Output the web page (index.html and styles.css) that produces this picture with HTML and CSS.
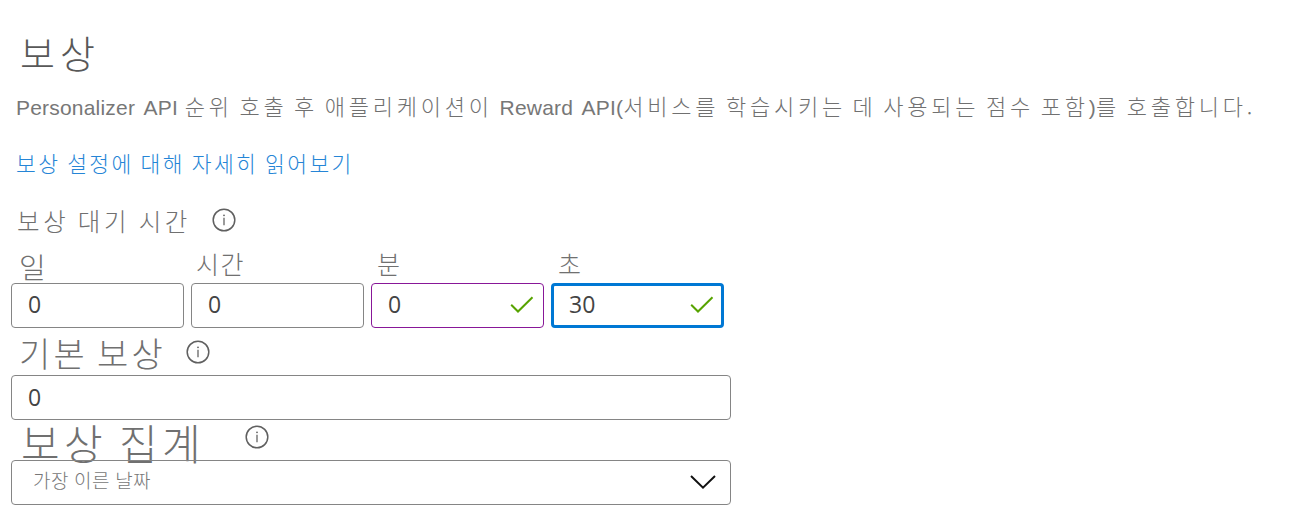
FILE: index.html
```html
<!DOCTYPE html>
<html lang="ko">
<head>
<meta charset="utf-8">
<title>보상</title>
<link rel="stylesheet" href="styles.css">
</head>
<body>
<svg class="defs" width="0" height="0">
  <symbol id="info" viewBox="0 0 24 24"><circle cx="12" cy="12" r="10.8" fill="none" stroke="#606060" stroke-width="1.5"/><path d="M12 9.8v7.4" stroke="#707070" stroke-width="1.4"/><circle cx="12" cy="7.3" r="0.9" fill="#606060"/></symbol>
  <symbol id="check" viewBox="0 0 24 18"><path d="M1.2 8.8L8 15.5L22.5 1.2" fill="none" stroke="#57a300" stroke-width="2"/></symbol>
</svg>
<main class="panel">
  <h1 class="title">보상</h1>
  <p class="desc"><span class="latin">Personalizer API</span> 순위 호출 후 애플리케이션이 <span class="latin">Reward API(</span>서비스를 학습시키는 데 사용되는 점수 포함<span class="latin">)</span>를 호출합니다.</p>
  <a class="link">보상 설정에 대해 자세히 읽어보기</a>
  <div class="label wait"><span>보상 대기 시간</span><svg class="info"><use href="#info"/></svg></div>
  <div class="durations">
    <div class="field"><label class="unit day">일</label><div class="box">0</div></div>
    <div class="field"><label class="unit hour">시간</label><div class="box">0</div></div>
    <div class="field"><label class="unit minute">분</label><div class="box changed">0<svg class="check"><use href="#check"/></svg></div></div>
    <div class="field"><label class="unit second">초</label><div class="box focused">30<svg class="check"><use href="#check"/></svg></div></div>
  </div>
  <div class="label base"><span>기본 보상</span><svg class="info"><use href="#info"/></svg></div>
  <div class="box">0</div>
  <div class="label aggregate"><span>보상 집계</span><svg class="info"><use href="#info"/></svg></div>
  <div class="box select"><span>가장 이른 날짜</span><svg class="chevron" viewBox="0 0 26 14"><path d="M1 1L13 12.6L25 1" fill="none" stroke="#111" stroke-width="2"/></svg></div>
</main>
</body>
</html>
```
FILE: styles.css
```css
* { box-sizing: border-box; }
body { margin: 0; background: #fff; color: #707070; font-family: "Noto Sans CJK KR", sans-serif; font-weight: 300; }
.defs { position: absolute; }
.panel { display: flex; flex-direction: column; width: 1303px; height: 531px; padding: 28px 0 0 11px; overflow: hidden; white-space: nowrap; }
.title { margin: 0; padding-left: 9px; height: 48px; font-size: 38px; line-height: 48px; font-weight: 300; letter-spacing: 5px; color: #585858; }
.desc { margin: 13px 0 0; padding-left: 5px; height: 32px; font-size: 22px; line-height: 32px; letter-spacing: 3.76px; word-spacing: -3.2px; }
.latin { font-family: "Liberation Sans", Arial, sans-serif; font-size: 21px; font-weight: 400; letter-spacing: 0.2px; word-spacing: 3.5px; color: #777; }
.link { margin-top: 26px; padding-left: 5px; height: 32px; font-size: 21.5px; line-height: 32px; letter-spacing: 2.4px; word-spacing: -1.6px; color: #2585d6; }
.label { display: flex; align-items: flex-start; }
.info { width: 24px; height: 24px; flex: none; }
.wait { height: 44px; padding: 1px 0 0 6px; margin-top: 25px; font-size: 24.5px; line-height: 34px; letter-spacing: 3.6px; word-spacing: -1.9px; }
.wait span { width: 195px; margin-top: -1px; }
.wait .info { margin-top: 3px; }
.durations { display: flex; gap: 7px; height: 80px; }
.field { display: flex; flex-direction: column; width: 173px; }
.unit { height: 35px; padding-left: 5px; font-size: 25px; line-height: 31px; letter-spacing: 1.5px; }
.day { padding-left: 8px; font-size: 29px; line-height: 36px; }
.minute { padding-left: 6px; }
.second { padding-left: 7px; }
.box { display: flex; align-items: center; justify-content: space-between; flex: none; width: 720px; height: 45px; padding: 0 9px 2px 16px; border: 1px solid #858585; border-radius: 4px; font-family: "Open Sans", sans-serif; font-size: 23px; font-weight: 400; color: #444; }
.field .box { width: 173px; padding-bottom: 3px; }
.box.changed { border-color: #881798; }
.field .box.focused { border: 3px solid #0078d4; padding: 0 7px 3px 15px; }
.check { width: 24px; height: 18px; margin-top: 2px; }
.base { height: 47px; padding-left: 8px; font-size: 34px; line-height: 50px; letter-spacing: 3.3px; word-spacing: -4px; }
.base span { width: 167px; }
.base .info { margin-top: 12px; }
.aggregate { height: 40px; padding-left: 10px; font-size: 42px; line-height: 43px; letter-spacing: 4.3px; word-spacing: -4px; }
.aggregate span { width: 224px; }
.aggregate .info { margin-top: 5px; }
.box.select { padding: 0 14px 5px 21px; font-family: "Noto Sans CJK KR", sans-serif; font-size: 19px; line-height: 22px; font-weight: 300; letter-spacing: 0.4px; word-spacing: -0.4px; color: #777; }
.chevron { width: 26px; height: 14px; margin-top: 4px; }
```
